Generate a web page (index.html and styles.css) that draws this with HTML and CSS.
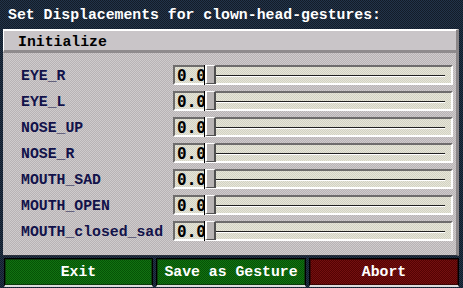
FILE: index.html
```html
<!DOCTYPE html>
<html>
<head>
<meta charset="utf-8">
<link rel="stylesheet" href="styles.css">
</head>
<body>
<div class="title">Set Displacements for clown-head-gestures:</div>
<div class="panel">
  <div class="header">Initialize</div>
  <div class="rows">
    <div class="label">EYE_R</div>
    <div class="field"><span class="val">0.0</span><span class="track"><span class="thumb"></span><span class="line"></span></span></div>
    <div class="label">EYE_L</div>
    <div class="field"><span class="val">0.0</span><span class="track"><span class="thumb"></span><span class="line"></span></span></div>
    <div class="label">NOSE_UP</div>
    <div class="field"><span class="val">0.0</span><span class="track"><span class="thumb"></span><span class="line"></span></span></div>
    <div class="label">NOSE_R</div>
    <div class="field"><span class="val">0.0</span><span class="track"><span class="thumb"></span><span class="line"></span></span></div>
    <div class="label">MOUTH_SAD</div>
    <div class="field"><span class="val">0.0</span><span class="track"><span class="thumb"></span><span class="line"></span></span></div>
    <div class="label">MOUTH_OPEN</div>
    <div class="field"><span class="val">0.0</span><span class="track"><span class="thumb"></span><span class="line"></span></span></div>
    <div class="label">MOUTH_closed_sad</div>
    <div class="field"><span class="val">0.0</span><span class="track"><span class="thumb"></span><span class="line"></span></span></div>
  </div>
</div>
<div class="buttons">
  <div class="btn green">Exit</div>
  <div class="btn green">Save as Gesture</div>
  <div class="btn red">Abort</div>
</div>
</body>
</html>
```
FILE: styles.css
```css
html, body {
  margin: 0;
  padding: 0;
}
body {
  width: 463px;
  height: 288px;
  overflow: hidden;
  background-color: #1b2735;
  background-image: repeating-conic-gradient(#22344a 0 25%, #131c28 0 50%);
  background-size: 2px 2px;
  font-family: "Liberation Mono", "DejaVu Sans Mono", monospace;
  font-weight: bold;
  font-size: 14.8px;
}
.title {
  height: 29px;
  line-height: 31px;
  padding-left: 8px;
  color: #ffffff;
  white-space: nowrap;
}
.panel {
  margin: 0 4px 0 3px;
  height: 225px;
  background-color: #c3bfc0;
  background-image: repeating-conic-gradient(#cfcbcc 0 25%, #b8b3b5 0 50%);
  background-size: 2px 2px;
  border-top: 1px solid #ffffff;
  border-right: 3px solid #8a8688;
  border-bottom: 1px solid #2a2f3a;
}
.header {
  height: 19px;
  line-height: 23px;
  padding-left: 14px;
  color: #000000;
  border-left: 1px solid #ffffff;
  border-top: 1px solid #ffffff;
  border-bottom: 3px solid #8e8a8c;
  background-color: #c9c5c8;
}
.rows {
  display: grid;
  grid-template-columns: 170px 280px;
  row-gap: 6px;
  padding-top: 12px;
}
.label {
  height: 20px;
  line-height: 22px;
  padding-left: 18px;
  color: #12124a;
  white-space: nowrap;
}
.field {
  display: flex;
  height: 16px;
  border-top: 2px solid #6e6c6c;
  border-left: 2px solid #6e6c6c;
  border-bottom: 2px solid #ffffff;
  border-right: 2px solid #ffffff;
  background-color: #dddcce;
  background-image: repeating-conic-gradient(#e6e6d8 0 25%, #d3d2c4 0 50%);
  background-size: 2px 2px;
}
.val {
  width: 29px;
  overflow: hidden;
  padding-left: 2px;
  box-sizing: border-box;
  font-family: "DejaVu Sans Mono", monospace;
  font-size: 16px;
  line-height: 17px;
  color: #000000;
  white-space: nowrap;
}
.track {
  flex: 1;
  display: flex;
  align-items: center;
  margin-top: -2px;
  margin-bottom: -2px;
  border-left: 1px solid #000000;
}
.thumb {
  width: 7px;
  height: 17px;
  align-self: flex-start;
  background: #b8b4b4;
  border-left: 2px solid #ffffff;
  border-top: 1px solid #ffffff;
  border-right: 2px solid #505050;
  border-bottom: 1px solid #505050;
}
.line {
  width: 229px;
  height: 0;
  border-top: 1px solid #202020;
  box-shadow: 0 1px 0 #ffffff;
}
.buttons {
  display: flex;
  gap: 3px;
  margin: 2px 4px 0 4px;
}
.btn {
  height: 26px;
  line-height: 27px;
  text-align: center;
  color: #ffffff;
  box-sizing: content-box;
  border: 1px solid #000000;
  border-bottom: 2px solid #dcdcdc;
}
.btn:nth-child(1) { width: 147px; }
.btn:nth-child(2) { width: 148px; }
.btn:nth-child(3) { width: 148px; }
.green {
  background-color: #0b620b;
  background-image: repeating-conic-gradient(#127212 0 25%, #055205 0 50%);
  background-size: 2px 2px;
  box-shadow: inset 0 0 0 1px #0c3a0c;
}
.red {
  background-color: #640808;
  background-image: repeating-conic-gradient(#741010 0 25%, #540303 0 50%);
  background-size: 2px 2px;
  box-shadow: inset 0 0 0 1px #3a0606;
}
```
